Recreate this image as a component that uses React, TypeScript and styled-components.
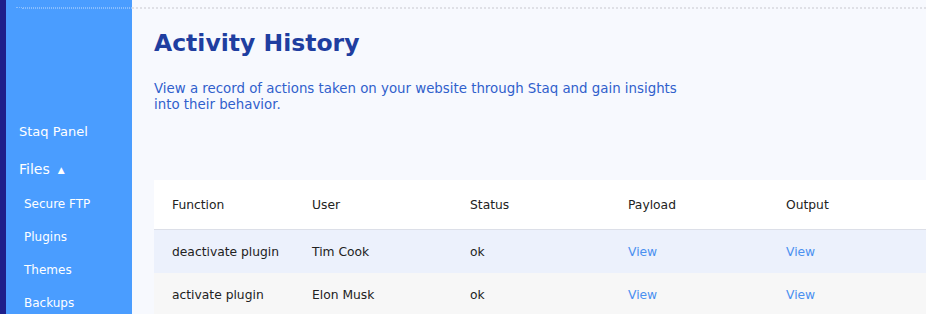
import styled, { createGlobalStyle } from 'styled-components';

const GlobalStyle = createGlobalStyle`
  html, body {
    margin: 0;
    padding: 0;
    background: #f7f9fe;
    font-family: 'DejaVu Sans', 'Noto Sans', sans-serif;
  }
  * {
    box-sizing: border-box;
  }
`;

const Layout = styled.div`
  display: flex;
  width: 100%;
  height: 314px;
  overflow: hidden;
`;

const Sidebar = styled.aside`
  display: flex;
  flex-shrink: 0;
  width: 132px;
  height: 100%;
  background: #4a9dff;
  border-left: 6px solid #1e1f8a;
`;

const SideInner = styled.div`
  display: flex;
  flex-direction: column;
  width: 100%;
  padding-top: 7px;
`;

const DotRow = styled.div<{ $indent: number }>`
  margin-left: ${p => p.$indent}px;
  height: 8px;
  border-top: 1px dotted rgba(255, 255, 255, 0.35);
`;

const NavList = styled.nav`
  display: flex;
  flex-direction: column;
  margin-top: 103px;
`;

const NavItem = styled.div<{ $sub?: boolean; $size: number; $height: number }>`
  display: flex;
  align-items: center;
  gap: 8px;
  height: ${p => p.$height}px;
  padding-left: ${p => (p.$sub ? 18 : 13)}px;
  color: #ffffff;
  font-size: ${p => p.$size}px;
`;

const Caret = styled.span`
  font-size: 9px;
  margin-top: 1px;
`;

const Main = styled.main`
  display: flex;
  flex-direction: column;
  flex: 1;
  min-width: 0;
`;

const TopRule = styled.div`
  margin-top: 7px;
  height: 2px;
  box-sizing: content-box;
  background: #a9afdc;
  background-clip: content-box;
  border-bottom: 2px dotted #dfe0e6;
`;

const Content = styled.div`
  display: flex;
  flex-direction: column;
  padding-left: 22px;
`;

const Title = styled.h1`
  margin: 16px 0 0;
  font-size: 23.5px;
  font-weight: 700;
  color: #1f3ea0;
  line-height: 36px;
`;

const Description = styled.p`
  margin: 20px 0 0;
  width: 545px;
  font-size: 13.35px;
  line-height: 16px;
  color: #3060cc;
`;

const Table = styled.div`
  display: flex;
  flex-direction: column;
  margin-top: 67px;
  background: #ffffff;
`;

const Row = styled.div<{ $bg: string; $height: number; $border?: boolean }>`
  display: grid;
  grid-template-columns: 140px 158px 158px 158px 158px;
  align-items: center;
  height: ${p => p.$height}px;
  padding-left: 18px;
  background: ${p => p.$bg};
  border-bottom: ${p => (p.$border ? '1px solid #dcdfe8' : 'none')};
`;

const Cell = styled.div<{ $link?: boolean }>`
  font-size: 12.3px;
  color: ${p => (p.$link ? '#4a90f0' : '#222222')};
  white-space: nowrap;
`;

const rows = [
  { fn: 'deactivate plugin', user: 'Tim Cook', status: 'ok', bg: '#ecf1fc' },
  { fn: 'activate plugin', user: 'Elon Musk', status: 'ok', bg: '#f7f7f7' },
];

export default function App() {
  return (
    <>
      <GlobalStyle />
      <Layout>
        <Sidebar>
          <SideInner>
            <DotRow $indent={10} />
            <DotRow $indent={16} />
            <NavList>
              <NavItem $size={13} $height={39}>Staq Panel</NavItem>
              <NavItem $size={14} $height={36}>
                Files <Caret>▲</Caret>
              </NavItem>
              <NavItem $sub $size={12} $height={33}>Secure FTP</NavItem>
              <NavItem $sub $size={12} $height={33}>Plugins</NavItem>
              <NavItem $sub $size={12} $height={33}>Themes</NavItem>
              <NavItem $sub $size={12} $height={33}>Backups</NavItem>
            </NavList>
          </SideInner>
        </Sidebar>
        <Main>
          <TopRule />
          <Content>
            <Title>Activity History</Title>
            <Description>
              View a record of actions taken on your website through Staq and gain insights into
              their behavior.
            </Description>
            <Table>
              <Row $bg="#ffffff" $height={50} $border>
                <Cell>Function</Cell>
                <Cell>User</Cell>
                <Cell>Status</Cell>
                <Cell>Payload</Cell>
                <Cell>Output</Cell>
              </Row>
              {rows.map((r, i) => (
                <Row key={i} $bg={r.bg} $height={43}>
                  <Cell>{r.fn}</Cell>
                  <Cell>{r.user}</Cell>
                  <Cell>{r.status}</Cell>
                  <Cell $link>View</Cell>
                  <Cell $link>View</Cell>
                </Row>
              ))}
            </Table>
          </Content>
        </Main>
      </Layout>
    </>
  );
}
